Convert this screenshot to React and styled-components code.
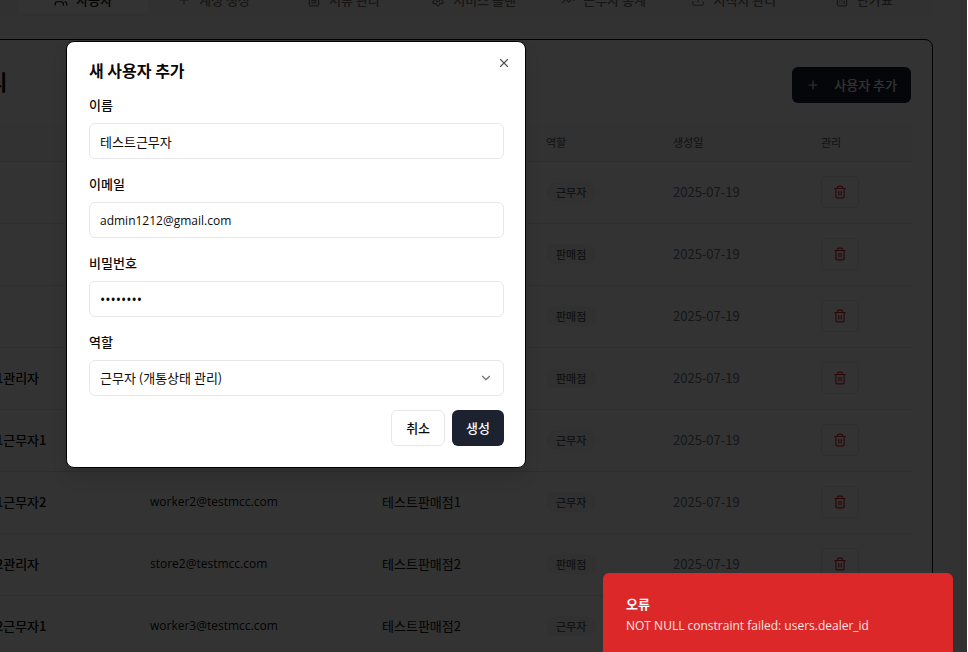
import React from 'react';
import styled, { createGlobalStyle } from 'styled-components';
import { Users, Plus, FileText, Settings, TrendingUp, Upload, Calculator, Trash2, X, ChevronDown } from 'lucide-react';

const latin = '"Open Sans", "Noto Sans CJK KR", sans-serif';

const Global = createGlobalStyle`
  *, *::before, *::after { box-sizing: border-box; }
  html, body, #root { height: 100%; }
  body { margin: 0; overflow: hidden; background: #fff; }
  body, button, input, select {
    font-family: "Noto Sans CJK KR", sans-serif;
    font-size: 13px;
    line-height: 18px;
    color: #0c0a09;
  }
`;

const Page = styled.div`
  position: relative;
  height: 100%;
  overflow: hidden;
  margin-right: 1px;
  background: #fafafa;
`;

const Content = styled.main`
  margin: -18px 34px 0 -116px;
  display: flex;
  flex-direction: column;
  gap: 22px;
`;

const Tabs = styled.nav`
  display: grid;
  grid-template-columns: repeat(8, 1fr);
  height: 35px;
  padding: 4px;
  border-radius: 6px;
  background: #f5f5f4;
`;

const Tab = styled.button`
  display: flex;
  align-items: center;
  justify-content: center;
  gap: 8px;
  padding: 0;
  border: 0;
  border-radius: 4px;
  font-weight: 500;
  background: ${p => (p.$active ? '#fff' : 'transparent')};
  color: ${p => (p.$active ? '#0c0a09' : '#78716c')};
  &:first-child { grid-column-start: 2; }
`;

const Card = styled.section`
  border: 1px solid #000;
  border-radius: 8px;
  background: #fff;
  padding: 27px 21px;
`;

const CardHead = styled.header`
  display: flex;
  justify-content: space-between;
  align-items: flex-start;
  margin-bottom: 21px;
`;

const Title = styled.h1`
  margin: 0;
  font-size: 21px;
  line-height: 28px;
  font-weight: 600;
`;

const Button = styled.button`
  display: inline-flex;
  align-items: center;
  justify-content: center;
  height: 36px;
  padding: 0 14px;
  gap: 14px;
  border-radius: 6px;
  font-weight: 500;
  border: ${p => (p.$primary ? '0' : '1px solid #e7e7e9')};
  background: ${p => (p.$primary ? '#1d2230' : '#fff')};
  color: ${p => (p.$primary ? '#fafafa' : '#0c0a09')};
`;

const Table = styled.table`
  width: 100%;
  border-collapse: collapse;
  table-layout: fixed;
  td, th { padding: 0 0 0 22px; text-align: left; border-bottom: 1px solid #e5e7eb; }
  th { height: 37px; font-size: 11px; font-weight: 500; color: #6b7280; background: #f9fafb; }
  td { height: 62px; }
  th:first-child, td:first-child { padding-left: 18px; }
  th:nth-child(1) { width: 222px; }
  th:nth-child(3) { width: 164px; }
  th:nth-child(4) { width: 127px; }
  th:nth-child(5) { width: 148px; }
  th:nth-child(6) { width: 112px; }
`;

const Name = styled.td`
  font-weight: 500;
  white-space: nowrap;
`;
const Email = styled.td`
  font-family: ${latin};
  font-size: 12px;
`;
const Muted = styled.td`
  color: #6b7280;
`;
const Badge = styled.span`
  display: inline-flex;
  padding: 1px 10px;
  border-radius: 10px;
  font-size: 11px;
  font-weight: 500;
  color: #5b5b60;
  background: #f4f4f5;
`;
const IconButton = styled.button`
  display: flex;
  align-items: center;
  justify-content: center;
  width: 38px;
  height: 32px;
  padding: 0;
  border: 1px solid #e7e7e9;
  border-radius: 6px;
  background: #fff;
  color: #dc2626;
`;

const Overlay = styled.div`
  position: absolute;
  inset: 0;
  background: rgba(0, 0, 0, 0.8);
`;

const Dialog = styled.form`
  position: absolute;
  top: 41px;
  left: 66px;
  width: 460px;
  padding: 18px 21px 21px 22px;
  border: 1px solid #000;
  border-radius: 8px;
  background: #fff;
  box-shadow: 0 10px 15px rgba(0, 0, 0, 0.1);
  display: flex;
  flex-direction: column;
  gap: 14px;
`;

const DialogTitle = styled.h2`
  margin: 0 0 2px;
  font-size: 16px;
  line-height: 20px;
  font-weight: 600;
`;
const Close = styled.button`
  position: absolute;
  top: 14px;
  right: 14px;
  display: flex;
  padding: 0;
  border: 0;
  background: none;
  color: #57534e;
`;

const Fields = styled.div`
  display: flex;
  flex-direction: column;
  gap: 16px;
`;
const Field = styled.div`
  display: flex;
  flex-direction: column;
  gap: 9px;
`;
const Label = styled.label`
  font-weight: 500;
`;
const Input = styled.input`
  width: 100%;
  height: 36px;
  padding: 0 10px;
  border: 1px solid #e7e7e9;
  border-radius: 6px;
  background: #fff;
  &[type='email'] { font-family: ${latin}; font-size: 12px; }
  &[type='password'] { font-family: ${latin}; font-size: 14px; }
`;
const SelectWrap = styled.div`
  display: grid;
  align-items: center;
  svg { grid-area: 1 / 1; justify-self: end; margin-right: 11px; color: #78716c; pointer-events: none; }
`;
const Select = styled.select`
  grid-area: 1 / 1;
  appearance: none;
  height: 36px;
  padding: 0 10px;
  border: 1px solid #e7e7e9;
  border-radius: 6px;
  background: #fff;
`;
const Actions = styled.footer`
  display: flex;
  justify-content: flex-end;
  gap: 7px;
`;

const Toast = styled.div`
  position: absolute;
  right: 14px;
  bottom: 0;
  width: 350px;
  padding: 22px 23px 17px;
  border-radius: 6px 6px 0 0;
  background: #dc2828;
  color: #fafafa;
`;
const ToastTitle = styled.strong`
  display: block;
  font-weight: 600;
  margin-bottom: 4px;
`;
const ToastText = styled.p`
  margin: 0;
  font-family: ${latin};
  font-size: 12px;
  opacity: 0.9;
`;

const tabs = [
  [Users, '사용자'], [Plus, '계정 생성'], [FileText, '서류 관리'], [Settings, '서비스 플랜'],
  [TrendingUp, '근무자 통계'], [Upload, '서식지 관리'], [Calculator, '단가표'],
];

const rows = [
  ['근무자', 'worker@testmcc.com', '', '근무자'],
  ['판매점관리자', 'dealer1@testmcc.com', '테스트판매점', '판매점'],
  ['판매점관리자', 'dealer2@testmcc.com', '테스트판매점', '판매점'],
  ['테스트판매점1관리자', 'store1@testmcc.com', '테스트판매점1', '판매점'],
  ['테스트판매점1근무자1', 'worker1@testmcc.com', '테스트판매점1', '근무자'],
  ['테스트판매점1근무자2', 'worker2@testmcc.com', '테스트판매점1', '근무자'],
  ['테스트판매점2관리자', 'store2@testmcc.com', '테스트판매점2', '판매점'],
  ['테스트판매점2근무자1', 'worker3@testmcc.com', '테스트판매점2', '근무자'],
];

export default function App() {
  return (
    <>
      <Global />
      <Page>
        <Content>
          <Tabs>
            {tabs.map(([Icon, label], i) => (
              <Tab key={label} $active={i === 0}><Icon size={14} />{label}</Tab>
            ))}
          </Tabs>
          <Card>
            <CardHead>
              <Title>사용자 관리</Title>
              <Button $primary><Plus size={14} />사용자 추가</Button>
            </CardHead>
            <Table>
              <thead>
                <tr><th>이름</th><th>이메일</th><th>소속</th><th>역할</th><th>생성일</th><th>관리</th></tr>
              </thead>
              <tbody>
                {rows.map(([name, mail, store, role]) => (
                  <tr key={mail}>
                    <Name>{name}</Name>
                    <Email>{mail}</Email>
                    <td>{store}</td>
                    <td><Badge>{role}</Badge></td>
                    <Muted>2025-07-19</Muted>
                    <td><IconButton aria-label="삭제"><Trash2 size={14} /></IconButton></td>
                  </tr>
                ))}
              </tbody>
            </Table>
          </Card>
        </Content>
        <Overlay />
        <Dialog onSubmit={e => e.preventDefault()}>
          <DialogTitle>새 사용자 추가</DialogTitle>
          <Fields>
            <Field>
              <Label htmlFor="name">이름</Label>
              <Input id="name" defaultValue="테스트근무자" />
            </Field>
            <Field>
              <Label htmlFor="email">이메일</Label>
              <Input id="email" type="email" defaultValue="admin1212@gmail.com" />
            </Field>
            <Field>
              <Label htmlFor="password">비밀번호</Label>
              <Input id="password" type="password" defaultValue="password" />
            </Field>
            <Field>
              <Label htmlFor="role">역할</Label>
              <SelectWrap>
                <Select id="role"><option>근무자 (개통상태 관리)</option></Select>
                <ChevronDown size={14} />
              </SelectWrap>
            </Field>
          </Fields>
          <Actions>
            <Button type="button">취소</Button>
            <Button $primary>생성</Button>
          </Actions>
          <Close type="button" aria-label="닫기"><X size={14} /></Close>
        </Dialog>
        <Toast role="alert">
          <ToastTitle>오류</ToastTitle>
          <ToastText>NOT NULL constraint failed: users.dealer_id</ToastText>
        </Toast>
      </Page>
    </>
  );
}
